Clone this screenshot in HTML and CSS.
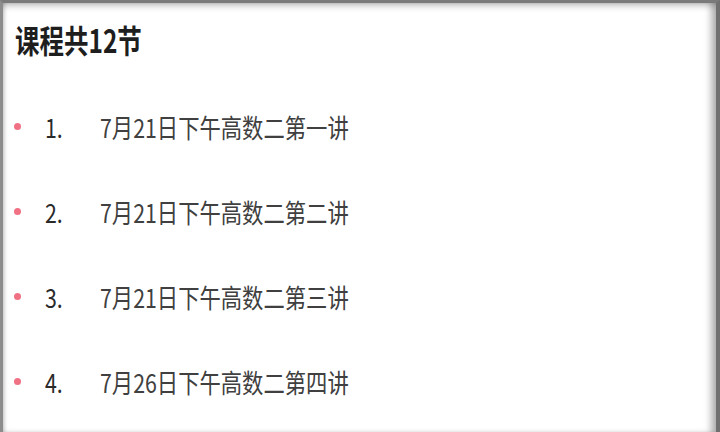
FILE: index.html
```html
<!DOCTYPE html>
<html lang="zh">
<head>
<meta charset="utf-8">
<title>课程</title>
<link rel="stylesheet" href="styles.css">
</head>
<body>
<div class="frame">
  <h1 class="title"><span class="squeeze">课程共12节</span></h1>
  <ul class="lessons">
    <li class="lesson"><span class="dot"></span><span class="num"><span class="squeeze">1.</span></span><span class="name"><span class="squeeze">7月21日下午高数二第一讲</span></span></li>
    <li class="lesson"><span class="dot"></span><span class="num"><span class="squeeze">2.</span></span><span class="name"><span class="squeeze">7月21日下午高数二第二讲</span></span></li>
    <li class="lesson"><span class="dot"></span><span class="num"><span class="squeeze">3.</span></span><span class="name"><span class="squeeze">7月21日下午高数二第三讲</span></span></li>
    <li class="lesson"><span class="dot"></span><span class="num"><span class="squeeze">4.</span></span><span class="name"><span class="squeeze">7月26日下午高数二第四讲</span></span></li>
  </ul>
</div>
</body>
</html>
```
FILE: styles.css
```css
html, body {
  margin: 0;
  padding: 0;
  background: #ffffff;
}
body {
  font-family: "Noto Sans CJK SC", "Noto Sans", sans-serif;
}
.frame {
  box-sizing: border-box;
  width: 720px;
  height: 432px;
  overflow: hidden;
  background: #ffffff;
  border-top: 3px solid #7a7a7a;
  border-left: 3px solid #8c8c8c;
  border-right: 4px solid #707070;
  box-shadow:
    inset 0 7px 7px -4px rgba(0, 0, 0, 0.22),
    inset 3px 0 4px -2px rgba(0, 0, 0, 0.25),
    inset -8px 0 7px -3px rgba(0, 0, 0, 0.3);
}
.squeeze {
  display: inline-block;
  transform-origin: left center;
  white-space: nowrap;
}
.title {
  margin: 0;
  padding: 21px 0 0 12px;
  height: 30px;
  line-height: 30px;
  font-size: 32px;
  font-weight: 700;
  color: #1e1e1e;
}
.title .squeeze {
  transform: scaleX(0.765);
}
.lessons {
  list-style: none;
  margin: 30px 0 0 0;
  padding: 0;
}
.lesson {
  display: flex;
  align-items: center;
  height: 85px;
  font-size: 26px;
  line-height: 30px;
}
.dot {
  width: 7px;
  height: 7px;
  border-radius: 50%;
  background: #f07183;
  margin-left: 11px;
  flex: none;
}
.num {
  width: 55px;
  margin-left: 24px;
  flex: none;
  color: #2a2a2a;
  font-weight: 400;
}
.num .squeeze,
.name .squeeze {
  transform: scaleX(0.82);
}
.name {
  color: #404040;
}
```
